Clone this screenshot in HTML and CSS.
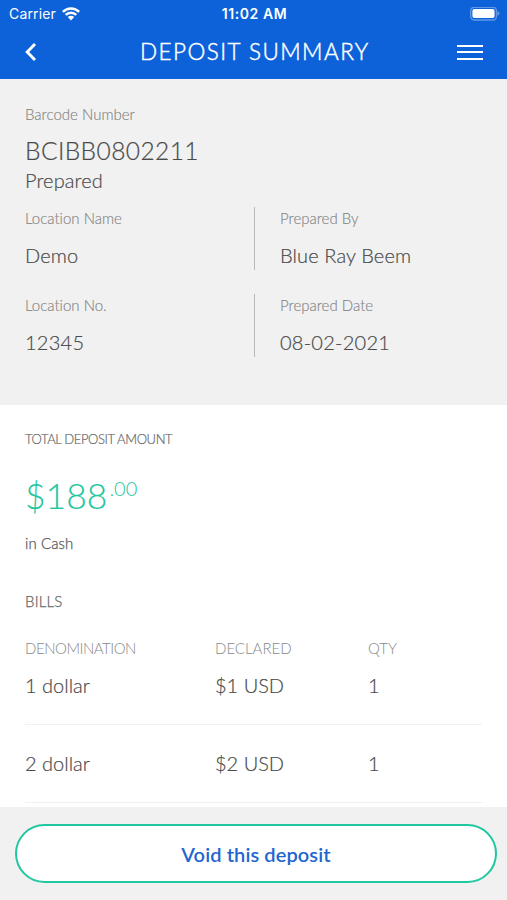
FILE: index.html
```html
<!DOCTYPE html>
<html lang="en">
<head>
  <meta charset="UTF-8">
  <title>Deposit Summary</title>
  <meta name="viewport" content="width=device-width, initial-scale=1.0">
  <link rel="stylesheet" href="styles.css">
</head>
<body>

<div class="app">
  <header class="header">
    <div class="status-bar">
      <div class="carrier">
        <span>Carrier</span>
        <svg class="wifi" width="18" height="14" viewBox="0 0 18 14">
          <g fill="none" stroke="#fff" stroke-width="2.5">
            <path d="M0.8 4.9C5.4 0.2 12.6 0.2 17.2 4.9"/>
            <path d="M3.7 7.9C6.7 4.9 11.3 4.9 14.3 7.9"/>
          </g>
          <path d="M5.8 10.1C7.6 8.3 10.4 8.3 12.2 10.1L9 13.4Z" fill="#fff"/>
        </svg>
      </div>
      <div class="clock">11:02 AM</div>
      <div class="battery">
        <svg width="30" height="14" viewBox="0 0 30 14">
          <rect x="0.7" y="0.2" width="25.8" height="12.8" rx="3.8" fill="none" stroke="#fff" stroke-opacity="0.35" stroke-width="1.4"/>
          <rect x="2.4" y="2.1" width="22.2" height="9" rx="2" fill="#fff"/>
          <path d="M27.6 4.4C30 5.1 30 7.9 27.6 8.6Z" fill="#fff" fill-opacity="0.4"/>
        </svg>
      </div>
    </div>
    <div class="nav-bar">
      <svg class="back" width="12" height="20" viewBox="0 0 12 20">
        <path d="M10 2L2.2 10L10 18" fill="none" stroke="#fff" stroke-width="2.9"/>
      </svg>
      <h1 class="title">DEPOSIT SUMMARY</h1>
      <div class="menu"><span></span><span></span><span></span></div>
    </div>
  </header>

  <section class="details">
    <div class="label barcode-label">Barcode Number</div>
    <div class="barcode">BCIBB0802211</div>
    <div class="value status">Prepared</div>
    <div class="info-grid">
      <div class="info">
        <div class="label">Location Name</div>
        <div class="value">Demo</div>
      </div>
      <div class="info divided">
        <div class="label">Prepared By</div>
        <div class="value">Blue Ray Beem</div>
      </div>
      <div class="info">
        <div class="label">Location No.</div>
        <div class="value number">12345</div>
      </div>
      <div class="info divided">
        <div class="label">Prepared Date</div>
        <div class="value number">08-02-2021</div>
      </div>
    </div>
  </section>

  <section class="deposit">
    <div class="total-label">TOTAL DEPOSIT AMOUNT</div>
    <div class="amount"><span class="dollars">$188</span><span class="cents">.00</span></div>
    <div class="method">in Cash</div>
    <h2 class="bills-title">BILLS</h2>
    <div class="bills">
      <div class="row head">
        <span class="denomination">DENOMINATION</span><span>DECLARED</span><span>QTY</span>
      </div>
      <div class="row">
        <span>1 dollar</span><span>$1 USD</span><span>1</span>
      </div>
      <div class="row">
        <span>2 dollar</span><span>$2 USD</span><span>1</span>
      </div>
    </div>
  </section>

  <footer class="footer">
    <button type="button" class="void-btn">Void this deposit</button>
  </footer>
</div>

</body>
</html>
```
FILE: styles.css
```css
body {
  margin: 0;
  font-family: Lato, sans-serif;
  font-weight: 300;
  font-variant-ligatures: none;
  color: #4a4a4a;
  background: #fff;
}
.app {
  display: flex;
  flex-direction: column;
  height: 900px;
  overflow: hidden;
}
.header {
  height: 79px;
  flex: none;
  background: #0d62d9;
  color: #fff;
}
.status-bar {
  display: grid;
  grid-template-columns: 1fr auto 1fr;
  align-items: center;
  height: 27px;
  padding: 0 7px 0 9px;
  font-family: Inter, sans-serif;
  font-size: 14px;
}
.carrier {
  display: flex;
  align-items: center;
  gap: 6px;
  font-weight: 400;
  letter-spacing: 0.15px;
}
.clock {
  font-weight: 600;
  letter-spacing: 0.55px;
}
.battery {
  display: flex;
  justify-content: flex-end;
}
.nav-bar {
  display: flex;
  align-items: center;
  height: 50px;
  padding: 0 24px 0 25px;
}
.title {
  flex: 1;
  margin: 0 0 0 103px;
  font-size: 22.5px;
  font-weight: 300;
  line-height: 30px;
  letter-spacing: 1.45px;
  -webkit-text-stroke: 0.45px;
}
.menu {
  display: flex;
  flex-direction: column;
  gap: 4.5px;
  width: 26px;
}
.menu span {
  height: 2px;
  background: #fff;
}
.details {
  flex: none;
  box-sizing: border-box;
  height: 326px;
  padding: 25px 25px 0;
  background: #f1f1f1;
}
.label {
  font-size: 15px;
  line-height: 20px;
  color: #858585;
  -webkit-text-stroke: 0.15px;
}
.barcode {
  margin-top: 12px;
  font-size: 24.5px;
  line-height: 30px;
  letter-spacing: 0.42px;
}
.value {
  font-size: 20px;
  line-height: 28px;
  letter-spacing: 0.12px;
}
.barcode,
.value,
.row {
  -webkit-text-stroke: 0.2px;
}
.number {
  letter-spacing: 0.25px;
}
.info-grid {
  display: grid;
  grid-template-columns: 229px 1fr;
  row-gap: 24px;
  margin-top: 13px;
}
.info {
  box-sizing: border-box;
  height: 63px;
  padding-top: 1px;
}
.info .value {
  margin-top: 13px;
}
.divided {
  padding-left: 25px;
  border-left: 1px solid #b8b8b8;
}
.deposit {
  flex: 1;
  min-height: 0;
  overflow: hidden;
  padding: 24px 25px 0;
}
.total-label {
  font-size: 13px;
  line-height: 20px;
  letter-spacing: -0.38px;
  color: #666;
  -webkit-text-stroke: 0.2px;
}
.amount {
  display: flex;
  margin-top: 25px;
  height: 44px;
  color: #1fc7a0;
}
.dollars {
  font-size: 35.5px;
  line-height: 44px;
  -webkit-text-stroke: 0.15px;
}
.cents {
  margin-left: 2px;
  font-size: 20px;
  line-height: 29px;
}
.method {
  margin-top: 10px;
  font-size: 15px;
  line-height: 30px;
  letter-spacing: 0.1px;
  color: #555;
  -webkit-text-stroke: 0.25px;
}
.bills-title {
  margin: 28px 0 0;
  font-size: 15px;
  font-weight: 300;
  line-height: 30px;
  letter-spacing: 0.2px;
  color: #666;
  -webkit-text-stroke: 0.25px;
}
.bills {
  margin-top: 17px;
}
.row {
  display: grid;
  grid-template-columns: 190px 153px 1fr;
  box-sizing: border-box;
  height: 78px;
  padding-top: 24px;
  border-bottom: 1px solid #f0f0f0;
  font-size: 20px;
  line-height: 28px;
}
.head {
  height: 30px;
  padding: 0;
  border: none;
  font-size: 15px;
  line-height: 30px;
  color: #888;
  -webkit-text-stroke: 0;
}
.denomination {
  letter-spacing: -0.48px;
}
.head + .row {
  height: 62px;
  padding-top: 8px;
}
.footer {
  flex: none;
  box-sizing: border-box;
  height: 93px;
  padding: 17px 10px 0 15px;
  background: #f1f1f1;
}
.void-btn {
  display: block;
  width: 100%;
  height: 59px;
  padding: 0;
  border: 2.5px solid #1fc7a0;
  border-radius: 30px;
  background: #fff;
  color: #1f66d0;
  font-family: Lato, sans-serif;
  font-size: 20px;
  font-weight: 600;
  letter-spacing: 0.1px;
}
```
